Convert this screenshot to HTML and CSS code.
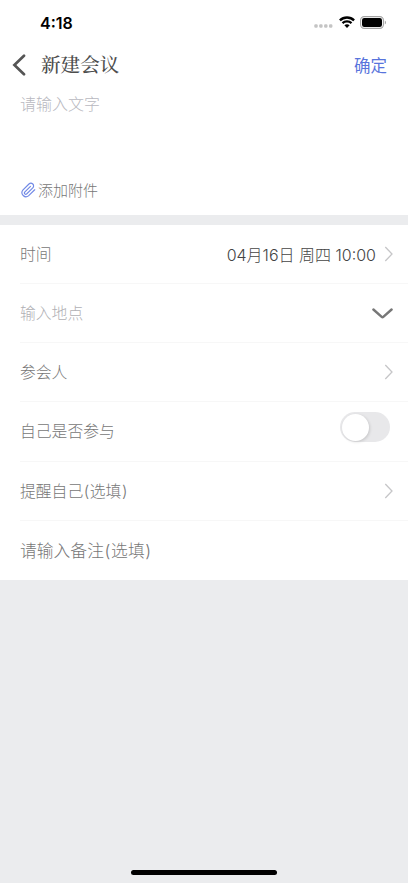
FILE: index.html
```html
<!DOCTYPE html>
<html lang="zh-CN">
<head>
    <meta charset="utf-8">
    <meta name="viewport" content="width=device-width, initial-scale=1">
    <title>新建会议</title>
    <link rel="stylesheet" href="styles.css">
</head>
<body>
<div class="statusbar">
    <span class="clock">4:18</span>
    <div class="signals">
        <svg width="19" height="4" viewBox="0 0 19 4" class="dots"><g fill="#c4c4c4"><rect x="0.3" y="0.3" width="3.4" height="3.4" rx="1.2"/><rect x="5.2" y="0.3" width="3.4" height="3.4" rx="1.2"/><rect x="10.1" y="0.3" width="3.4" height="3.4" rx="1.2"/><rect x="15" y="0.3" width="3.4" height="3.4" rx="1.2"/></g></svg>
        <svg width="16" height="12" viewBox="0 0 16 12" class="wifi"><g fill="none" stroke="#000" stroke-width="2.3"><path d="M0.9 4.4 C4.8 0.5 11.2 0.5 15.1 4.4"/><path d="M3.5 7.2 C6 4.8 10 4.8 12.5 7.2"/></g><path d="M5.4 9.2 C6.9 7.9 9.1 7.9 10.6 9.2 L8 11.9Z"/></svg>
        <svg width="27" height="13" viewBox="0 0 27 13" class="battery"><rect x="0.6" y="0.6" width="22.8" height="11.8" rx="3.6" fill="none" stroke="#a3a3a3" stroke-width="1.1"/><rect x="2" y="2" width="20" height="9" rx="2.2"/><path d="M24.8 4.5 C26.4 5.1 26.4 7.9 24.8 8.5Z" fill="#a3a3a3"/></svg>
    </div>
</div>
<div class="navbar">
    <svg class="back" width="14" height="22" viewBox="0 0 14 22"><path d="M12 1.8 L2.4 11 L12 20.2" fill="none" stroke="#555" stroke-width="2.7" stroke-linecap="round"/></svg>
    <span class="title">新建会议</span>
    <span class="confirm">确定</span>
</div>
<div class="content">
    <div class="placeholder">请输入文字</div>
    <div class="attach">
        <svg width="15" height="16" viewBox="0 0 24 24"><path d="M21.4 11.1 L12.2 20.2 A6 6 0 0 1 3.8 11.8 L12.9 2.6 A4 4 0 0 1 18.6 8.3 L9.4 17.4 A2 2 0 0 1 6.6 14.6 L15.1 6.1" transform="translate(-1.2 -.4) scale(1.08)" fill="none" stroke="#7189e6" stroke-width="1.7" stroke-linecap="round"/></svg>
        <span>添加附件</span>
    </div>
</div>
<div class="list">
    <div class="row">
        <span class="label">时间</span>
        <span class="value">04月16日 周四 10:00</span>
        <svg class="arrow" width="9" height="16" viewBox="0 0 9 16"><path d="M1.3 1 L8 8 L1.3 15"/></svg>
    </div>
    <div class="row">
        <span class="label hint">输入地点</span>
        <svg class="down" width="21" height="12" viewBox="0 0 21 12"><path d="M1.4 1.5 L9.7 8.9 Q10.5 9.6 11.3 8.9 L19.6 1.5"/></svg>
    </div>
    <div class="row">
        <span class="label">参会人</span>
        <svg class="arrow" width="9" height="16" viewBox="0 0 9 16"><path d="M1.3 1 L8 8 L1.3 15"/></svg>
    </div>
    <div class="row">
        <span class="label">自己是否参与</span>
        <span class="switch"><span class="knob"></span></span>
    </div>
    <div class="row">
        <span class="label">提醒自己<span class="paren">(</span>选填<span class="paren">)</span></span>
        <svg class="arrow" width="9" height="16" viewBox="0 0 9 16"><path d="M1.3 1 L8 8 L1.3 15"/></svg>
    </div>
    <div class="row">
        <span class="label remark">请输入备注<span class="paren">(</span>选填<span class="paren">)</span></span>
    </div>
</div>
<div class="home"></div>
</body>
</html>
```
FILE: styles.css
```css
* {box-sizing:border-box;}
body {
    margin:0; height:883px; background:#ebecee; overflow:hidden;
    display:flex; flex-direction:column;
    font-family:Inter, "Noto Sans CJK SC", sans-serif;
    font-weight:300; color:#777; white-space:nowrap;
}
svg {display:block; flex:none;}

.statusbar {height:43px; background:#fff; display:flex; justify-content:space-between; padding:0 21px 0 40px;}
.clock {font-size:16px; font-weight:600; color:#000; line-height:20px; padding-top:13px;}
.signals {display:flex; height:13px; margin-top:16px; gap:5px;}
.dots {margin-top:8px;}
.wifi {margin-left:1px;}

.navbar {height:44px; background:#fff; display:flex; align-items:center; padding:0 21px 0 12px;}
.title {font-family:"Noto Serif CJK SC", "Noto Sans CJK SC", serif; font-size:19.6px; font-weight:500; color:#4d4d4d; margin-left:15px; padding-bottom:2px; line-height:28px;}
.confirm {margin-left:auto; font-size:16.5px; font-weight:400; color:#5874dc;}

.content {height:128px; background:#fff; padding:5px 20px 0; display:flex; flex-direction:column; justify-content:space-between;}
.placeholder {font-size:16px; line-height:24px; color:#b8b8c0;}
.attach {display:flex; align-items:center; gap:2px; height:20px; margin-bottom:15px; padding-left:1px; font-size:15px;}
.attach span {margin-top:-2px;}

.list {margin-top:10px; background:#fff;}
.row {height:59.15px; margin-left:20px; padding-right:15px; display:flex; align-items:center; border-bottom:1px solid #f7f7f7;}
.row:last-child {border-bottom:0;}
.label {font-size:15.8px; line-height:24px; padding-top:2px;}
.hint {color:#b0b0b4;}
.remark {font-size:16.8px;}
.paren {display:inline-block; width:6.6px; text-align:center;}
.remark .paren {width:7.2px;}
.value {margin-left:auto; font-size:16px; color:#444;}
.arrow, .down {margin-left:auto; fill:none; stroke:#c6c6c8; stroke-width:1.3;}
.value + .arrow {margin-left:8px;}
.down {margin-top:2px; stroke:#777; stroke-width:2.4; stroke-linecap:round;}
.switch {width:50px; height:30px; margin:0 3px 8px auto; border-radius:15px; background:#e8e8ea; padding:1.5px 2px;}
.knob {display:block; width:27px; height:27px; border-radius:50%; background:#fff; box-shadow:1px 1px 3px rgba(0,0,0,.14);}

.home {width:146px; height:5px; border-radius:3px; background:#000; margin:auto auto 8px;}
```
